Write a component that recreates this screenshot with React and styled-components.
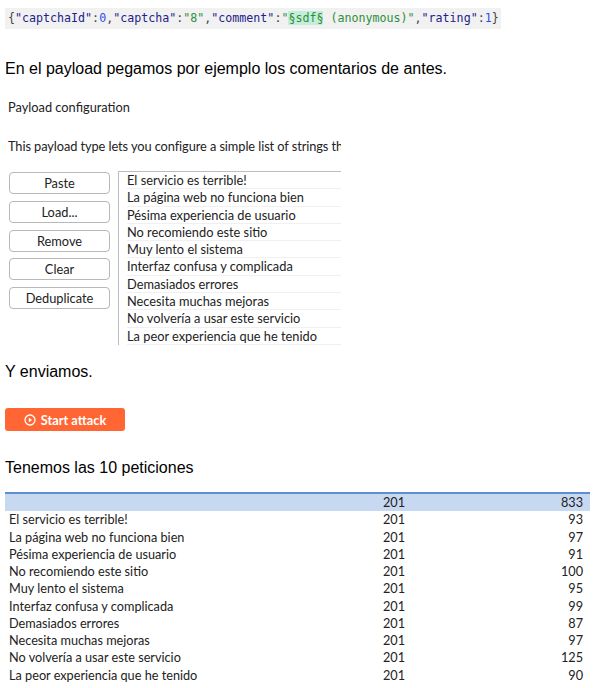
import React from "react";
import styled, { createGlobalStyle } from "styled-components";

const GlobalStyle = createGlobalStyle`
  body {
    margin: 0;
    background: #fff;
    font-family: "Liberation Sans", Arial, sans-serif;
  }
`;

const Page = styled.div`
  padding: 8px 5px 0 5px;
  width: 598px;
  box-sizing: border-box;
`;

const Code = styled.pre`
  margin: 0;
  width: 496px;
  height: 21px;
  line-height: 21px;
  padding: 0 3px;
  box-sizing: border-box;
  background: #f1f1f1;
  font-family: "DejaVu Sans Mono", monospace;
  font-size: 11.65px;
  color: #333;
  white-space: pre;
`;

const Tok = styled.span`
  color: ${(p) =>
    p.kind === "key" ? "#22228a" : p.kind === "num" ? "#2f4fe8" : p.kind === "str" ? "#2f8f3a" : "#444"};
  background: ${(p) => (p.mark ? "#c4eedb" : "transparent")};
`;

const Para = styled.p`
  margin: ${(p) => p.m || "0"};
  font-size: 16px;
  line-height: 18px;
  color: #000;
`;

const Panel = styled.div`
  width: 336px;
  height: 250px;
  overflow: hidden;
  font-family: "Lato", "Noto Sans", sans-serif;
  font-size: 12.8px;
  color: #222;
  padding: 4px 0 0 3px;
  box-sizing: border-box;
  background: #fff;
`;

const PanelTitle = styled.div`
  line-height: 16px;
`;

const PanelDesc = styled.div`
  margin-top: 23px;
  line-height: 16px;
  white-space: nowrap;
  letter-spacing: -0.08px;
`;

const PayloadArea = styled.div`
  display: flex;
  gap: 8px;
  margin-top: 17px;
`;

const ButtonCol = styled.div`
  display: flex;
  flex-direction: column;
  gap: 6.75px;
  padding-top: 1px;
  margin-left: 1px;
`;

const SideButton = styled.div`
  width: 101px;
  height: 22px;
  box-sizing: border-box;
  border: 1px solid #b8b8b8;
  border-radius: 4px;
  background: #fff;
  display: flex;
  align-items: center;
  justify-content: center;
  font-size: 12.8px;
  color: #222;
`;

const ListBox = styled.div`
  flex: 1;
  border-left: 1px solid #bdbdbd;
  border-top: 1px solid #bdbdbd;
  height: 180px;
  padding-left: 8px;
  white-space: nowrap;
`;

const ListItem = styled.div`
  height: 17.3px;
  line-height: 17.3px;
  border-bottom: 1px solid #f0f0f0;
  box-sizing: border-box;
`;

const AttackButton = styled.div`
  width: 120px;
  height: 23px;
  border-radius: 3px;
  background: #ff6633;
  color: #fff;
  display: flex;
  align-items: center;
  justify-content: center;
  gap: 5px;
  font-family: "Lato", "Noto Sans", sans-serif;
  font-weight: 700;
  font-size: 12.8px;
  margin-top: 27px;
`;

const Table = styled.div`
  margin-top: 15px;
  width: 585px;
  font-family: "Lato", "Noto Sans", sans-serif;
  font-size: 12.7px;
  color: #222;
`;

const Row = styled.div`
  display: grid;
  grid-template-columns: 374px 1fr 80px;
  height: 17.25px;
  line-height: 17.25px;
  padding: 0 7px 0 4px;
  background: ${(p) => (p.selected ? "#c6d9f1" : "#fff")};
  border-top: ${(p) => (p.selected ? "2px solid #5b8fd1" : "none")};
`;

const Num = styled.span`
  text-align: right;
`;

const PlayIcon = () => (
  <svg width="12" height="12" viewBox="0 0 12 12">
    <circle cx="6" cy="6" r="5" fill="none" stroke="#fff" strokeWidth="1.3" />
    <path d="M4.8 3.8 L8.2 6 L4.8 8.2 Z" fill="#fff" />
  </svg>
);

const comments = [
  "El servicio es terrible!",
  "La página web no funciona bien",
  "Pésima experiencia de usuario",
  "No recomiendo este sitio",
  "Muy lento el sistema",
  "Interfaz confusa y complicada",
  "Demasiados errores",
  "Necesita muchas mejoras",
  "No volvería a usar este servicio",
  "La peor experiencia que he tenido",
];

const lengths = [93, 97, 91, 100, 95, 99, 87, 97, 125, 90];

export default function App() {
  return (
    <Page>
      <GlobalStyle />
      <Code>
        <Tok>{"{"}</Tok>
        <Tok kind="key">"captchaId"</Tok>
        <Tok>:</Tok>
        <Tok kind="num">0</Tok>
        <Tok>,</Tok>
        <Tok kind="key">"captcha"</Tok>
        <Tok>:</Tok>
        <Tok kind="str">"8"</Tok>
        <Tok>,</Tok>
        <Tok kind="key">"comment"</Tok>
        <Tok>:</Tok>
        <Tok kind="str">"</Tok>
        <Tok kind="str" mark>§sdf§</Tok>
        <Tok kind="str"> (anonymous)"</Tok>
        <Tok>,</Tok>
        <Tok kind="key">"rating"</Tok>
        <Tok>:</Tok>
        <Tok kind="num">1</Tok>
        <Tok>{"}"}</Tok>
      </Code>

      <Para m="31px 0 17px 0">En el payload pegamos por ejemplo los comentarios de antes.</Para>

      <Panel>
        <PanelTitle>Payload configuration</PanelTitle>
        <PanelDesc>This payload type lets you configure a simple list of strings th</PanelDesc>
        <PayloadArea>
          <ButtonCol>
            {["Paste", "Load...", "Remove", "Clear", "Deduplicate"].map((b) => (
              <SideButton key={b}>{b}</SideButton>
            ))}
          </ButtonCol>
          <ListBox>
            {comments.map((c) => (
              <ListItem key={c}>{c}</ListItem>
            ))}
          </ListBox>
        </PayloadArea>
      </Panel>

      <Para m="18px 0 0 0">Y enviamos.</Para>

      <AttackButton>
        <PlayIcon />
        Start attack
      </AttackButton>

      <Para m="28px 0 0 0">Tenemos las 10 peticiones</Para>

      <Table>
        <Row selected>
          <span />
          <span>201</span>
          <Num>833</Num>
        </Row>
        {comments.map((c, i) => (
          <Row key={c}>
            <span>{c}</span>
            <span>201</span>
            <Num>{lengths[i]}</Num>
          </Row>
        ))}
      </Table>
    </Page>
  );
}
